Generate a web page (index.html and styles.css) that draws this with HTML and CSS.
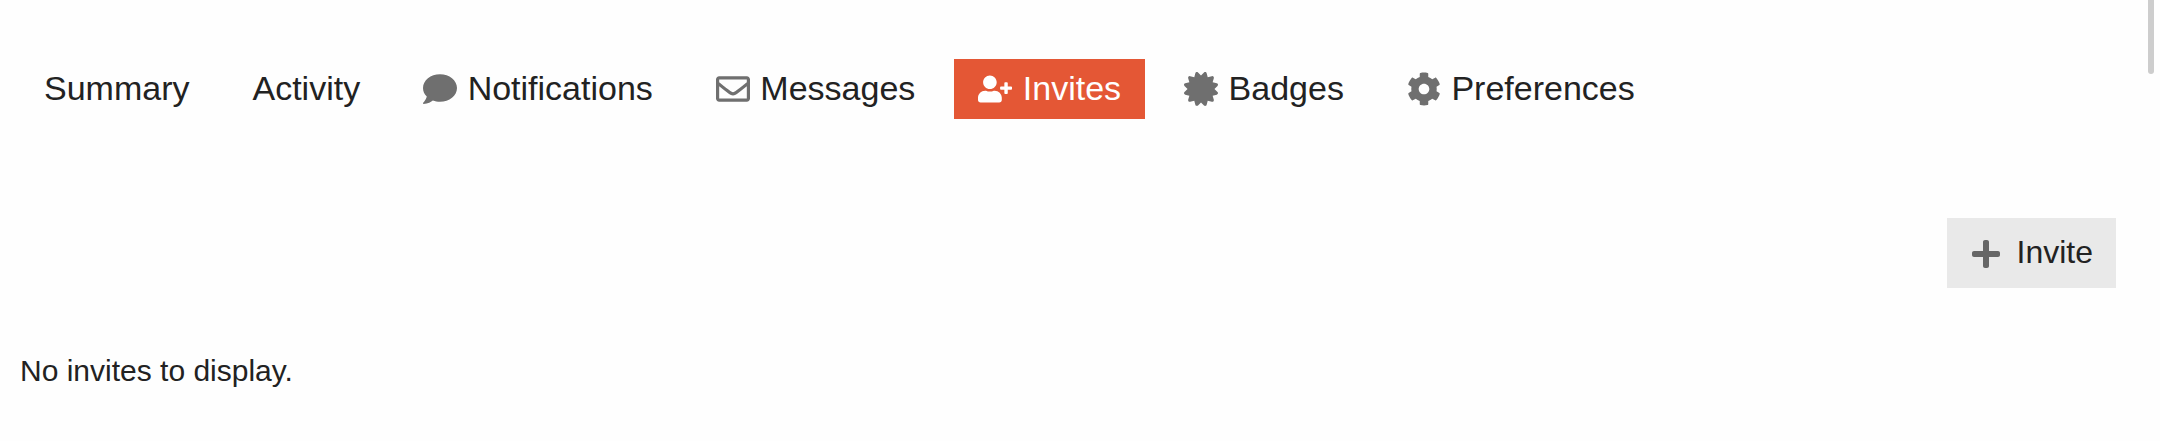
FILE: index.html
```html
<!DOCTYPE html>
<html lang="en">
<head>
  <meta charset="UTF-8">
  <title>Invites</title>
  <link rel="stylesheet" href="styles.css">
</head>
<body>
  <div class="container">
    <nav>
      <ul class="nav-pills">
        <li><a href="#">Summary</a></li>
        <li><a href="#">Activity</a></li>
        <li>
          <a href="#">
            <svg class="icon" viewBox="0 0 512 512"><path d="M256 32C114.600 32 0 125.100 0 240c0 49.600 21.400 95 57 130.700C44.500 421.100 2.700 466 2.200 466.500c-2.200 2.300-2.800 5.700-1.500 8.700S4.800 480 8 480c66.300 0 116-31.800 140.600-51.400 32.700 12.300 69 19.400 107.400 19.400 141.400 0 256-93.100 256-208S397.400 32 256 32z"/></svg>
            Notifications
          </a>
        </li>
        <li>
          <a href="#">
            <svg class="icon" viewBox="0 0 512 512"><path d="M464 64H48C21.490 64 0 85.490 0 112v288c0 26.510 21.490 48 48 48h416c26.510 0 48-21.490 48-48V112c0-26.510-21.490-48-48-48zm0 48v40.805c-22.422 18.259-58.168 46.651-134.587 106.490-16.841 13.247-50.201 45.072-73.413 44.701-23.208.375-56.579-31.459-73.413-44.701C106.180 199.465 70.425 171.067 48 152.805V112h416zM48 400V214.398c22.914 18.251 55.409 43.862 104.938 82.646 21.857 17.205 60.134 55.186 103.062 54.955 42.717.231 80.509-37.199 103.053-54.947 49.528-38.783 82.032-64.401 104.947-82.653V400H48z"/></svg>
            Messages
          </a>
        </li>
        <li>
          <a href="#" class="active">
            <svg class="icon" viewBox="0 0 640 512"><path d="M624 208h-64v-64c0-8.800-7.200-16-16-16h-32c-8.800 0-16 7.200-16 16v64h-64c-8.800 0-16 7.200-16 16v32c0 8.800 7.200 16 16 16h64v64c0 8.800 7.200 16 16 16h32c8.800 0 16-7.200 16-16v-64h64c8.800 0 16-7.200 16-16v-32c0-8.800-7.200-16-16-16zm-400 48c70.700 0 128-57.300 128-128S294.700 0 224 0 96 57.300 96 128s57.300 128 128 128zm89.600 32h-16.700c-22.200 10.200-46.900 16-72.900 16s-50.600-5.800-72.900-16h-16.700C60.200 288 0 348.200 0 422.400V464c0 26.500 21.500 48 48 48h352c26.500 0 48-21.500 48-48v-41.600c0-74.200-60.200-134.400-134.400-134.400z"/></svg>
            Invites
          </a>
        </li>
        <li>
          <a href="#">
            <svg class="icon" viewBox="0 0 512 512"><path d="M458.622 255.920l45.985-45.005c13.708-12.977 7.316-36.039-10.664-40.339l-62.650-15.990 17.661-62.015c4.991-17.838-11.829-34.663-29.661-29.671l-61.994 17.667-15.984-62.671C337.085.197 313.765-6.276 300.990 7.228L256 53.570 211.011 7.229c-12.630-13.351-36.047-7.234-40.325 10.668l-15.984 62.671-61.995-17.667C74.870 57.907 58.056 74.738 63.046 92.572l17.661 62.015-62.650 15.990C.069 174.878-6.310 197.944 7.392 210.915l45.985 45.005-45.985 45.004c-13.708 12.977-7.316 36.039 10.664 40.339l62.650 15.990-17.661 62.015c-4.991 17.838 11.829 34.663 29.661 29.671l61.994-17.667 15.984 62.671c4.439 18.575 27.696 24.018 40.325 10.668L256 458.610l44.989 46.001c12.500 13.488 35.987 7.486 40.325-10.668l15.984-62.671 61.994 17.667c17.836 4.994 34.651-11.837 29.661-29.671l-17.661-62.015 62.650-15.990c17.987-4.302 24.366-27.367 10.664-40.339l-45.984-45.004z"/></svg>
            Badges
          </a>
        </li>
        <li>
          <a href="#">
            <svg class="icon" viewBox="0 0 512 512"><path d="M487.400 315.700l-42.600-24.600c4.300-23.200 4.300-47 0-70.200l42.600-24.600c4.900-2.800 7.100-8.600 5.500-14-11.100-35.600-30-67.800-54.700-94.600-3.800-4.100-10-5.100-14.800-2.300L380.800 110c-17.900-15.400-38.500-27.300-60.800-35.100V25.800c0-5.600-3.900-10.500-9.400-11.700-36.700-8.200-74.300-7.800-109.200 0-5.500 1.200-9.400 6.100-9.400 11.700V75c-22.200 7.900-42.800 19.800-60.800 35.100L88.700 85.500c-4.900-2.800-11-1.900-14.800 2.300-24.700 26.700-43.600 58.900-54.700 94.600-1.700 5.400.6 11.200 5.500 14L67.300 221c-4.300 23.200-4.300 47 0 70.200l-42.600 24.600c-4.900 2.800-7.100 8.600-5.500 14 11.100 35.600 30 67.800 54.700 94.600 3.800 4.100 10 5.100 14.800 2.300l42.600-24.600c17.900 15.400 38.500 27.300 60.800 35.100v49.200c0 5.600 3.900 10.500 9.400 11.700 36.700 8.200 74.300 7.800 109.200 0 5.500-1.200 9.400-6.100 9.400-11.700v-49.200c22.200-7.900 42.800-19.800 60.800-35.100l42.600 24.600c4.900 2.800 11 1.900 14.800-2.300 24.700-26.700 43.600-58.900 54.700-94.600 1.500-5.500-.7-11.300-5.600-14.100zM256 336c-44.100 0-80-35.900-80-80s35.900-80 80-80 80 35.900 80 80-35.900 80-80 80z"/></svg>
            Preferences
          </a>
        </li>
      </ul>
    </nav>

    <section class="user-invites">
      <div class="controls">
        <button class="btn">
          <svg class="icon" viewBox="0 0 448 512"><path d="M416 208H272V64c0-17.670-14.330-32-32-32h-32c-17.670 0-32 14.330-32 32v144H32c-17.670 0-32 14.330-32 32v32c0 17.670 14.330 32 32 32h144v144c0 17.670 14.330 32 32 32h32c17.670 0 32-14.330 32-32V304h144c17.670 0 32-14.330 32-32v-32c0-17.670-14.330-32-32-32z"/></svg>
          Invite
        </button>
      </div>
      <p>No invites to display.</p>
    </section>
  </div>
  <div class="scroll-thumb"></div>
</body>
</html>
```

FILE: styles.css
```css
body {
  font-family: "Liberation Sans", Arial, sans-serif;
  font-size: 30px;
  line-height: 42px;
  margin: 0;
  color: #222;
  background: #fefefe;
  overflow: hidden;
}

.container {
  padding: 59px 44px 0 20px;
}

.nav-pills {
  display: flex;
  gap: 15px;
  margin: 0;
  padding: 0;
  list-style: none;
}

.nav-pills a {
  display: flex;
  align-items: center;
  box-sizing: border-box;
  gap: 10.5px;
  height: 60px;
  padding: 0 24px 2px;
  font-size: 34px;
  color: #222;
  text-decoration: none;
}

.nav-pills a.active {
  background: #e45735;
  color: #fff;
}

.icon {
  width: 34px;
  height: 34px;
  margin-top: 2px;
  flex-shrink: 0;
  fill: #6f6f6f;
}

.active .icon {
  fill: #fff;
}

.controls {
  display: flex;
  justify-content: flex-end;
  margin-top: 99px;
}

.btn {
  display: flex;
  align-items: center;
  gap: 16px;
  height: 70px;
  padding: 0 23px 2px 24px;
  border: none;
  font-family: inherit;
  font-size: 32px;
  color: #222;
  background: #e9e9e9;
}

.btn .icon {
  width: 30px;
  height: 32px;
  margin-top: 4px;
  fill: #666;
}

.user-invites p {
  margin: 62px 0 0;
}

.scroll-thumb {
  position: absolute;
  top: 0;
  right: 6px;
  width: 6px;
  height: 74px;
  border-radius: 0 0 3px 3px;
  background: #cdcdcd;
}
```
